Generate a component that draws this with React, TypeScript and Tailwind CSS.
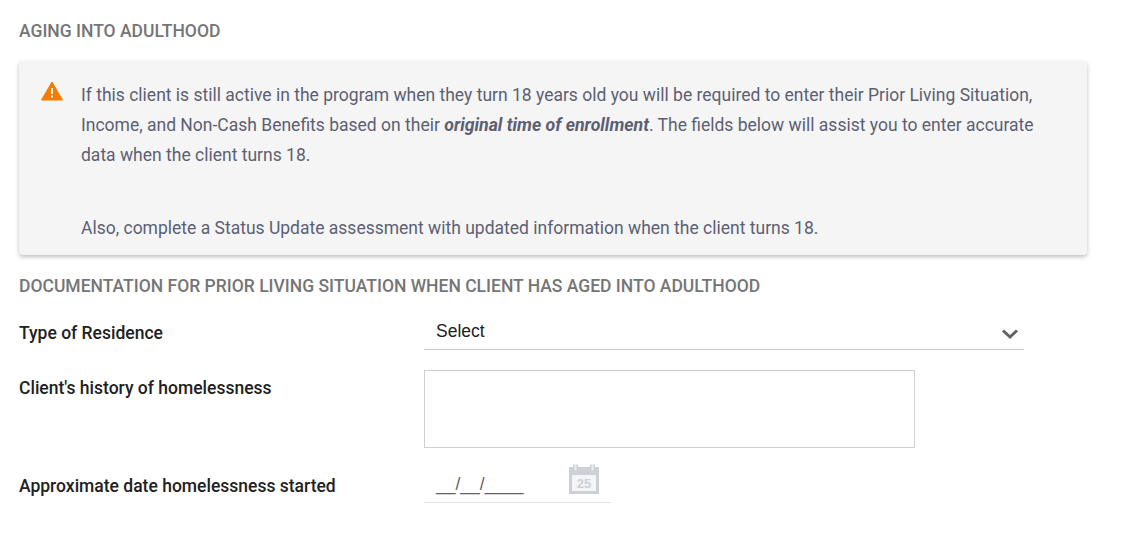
export default function App() {
  return (
    <div className="w-[1123px] h-[538px] overflow-hidden bg-white font-['Roboto',sans-serif]">
      <div className="w-[1068px] ml-[19px] pt-[21px]">
        <h3 className="text-[17.5px] leading-[21px] font-medium text-[#757575]">AGING INTO ADULTHOOD</h3>

        <div className="mt-[19px] flex h-[194px] rounded-[4px] bg-[#f5f5f5] shadow-[0_2px_4px_rgba(0,0,0,0.25)] pl-[22px] pt-[19px] text-[17.5px] leading-[30px] text-[#5c5f73]">
          <svg width="22" height="20" viewBox="0 0 22 20" className="mt-[1px] shrink-0">
            <path d="M11 1 L21.5 19 H0.5 Z" fill="#f57c00" stroke="#f57c00" strokeLinejoin="round" />
            <rect x="10" y="7" width="2" height="6" fill="#f5f5f5" />
            <rect x="10" y="14.5" width="2" height="2" fill="#f5f5f5" />
          </svg>
          <div className="ml-[18px] w-[970px]">
            <p>
              If this client is still active in the program when they turn 18 years old you will be required to enter their Prior Living Situation, Income, and Non-Cash Benefits based on their <b className="italic font-bold text-[17.7px]">original time of enrollment</b>. The fields below will assist you to enter accurate data when the client turns 18.
            </p>
            <p className="mt-[43px]">Also, complete a Status Update assessment with updated information when the client turns 18.</p>
          </div>
        </div>

        <h3 className="mt-[21px] text-[17.5px] leading-[21px] font-medium text-[#757575]">DOCUMENTATION FOR PRIOR LIVING SITUATION WHEN CLIENT HAS AGED INTO ADULTHOOD</h3>

        <div className="mt-[14px] flex">
          <label className="w-[405px] pt-[10px] text-[17.5px] leading-[24px] font-medium text-[#212121]">Type of Residence</label>
          <div className="flex h-[39px] w-[600px] items-center justify-between border-b border-[#cfcfcf] pl-[12px] pr-[5px] font-['Liberation_Sans',sans-serif] text-[17.5px] text-[#212121]">
            <span className="mt-[2px]">Select</span>
            <svg width="18" height="12" viewBox="0 0 18 12" className="mt-[8px]">
              <path d="M2 2.5 L9 9 L16 2.5" fill="none" stroke="#5f6368" strokeWidth="3" />
            </svg>
          </div>
        </div>

        <div className="mt-[20px] flex">
          <label className="w-[405px] pt-[6px] text-[17.5px] leading-[24px] font-medium text-[#212121]">Client's history of homelessness</label>
          <div className="h-[78px] w-[491px] border border-[#cfcfcf]" />
        </div>

        <div className="mt-[15px] flex">
          <label className="w-[405px] pt-[11px] text-[17.5px] leading-[24px] font-medium text-[#212121]">Approximate date homelessness started</label>
          <div className="flex h-[40px] w-[187px] items-start justify-between border-b border-[#e4e4e4] pl-[12px] pr-[12px]">
            <span className="mt-[9px] font-['Liberation_Sans',sans-serif] text-[17.5px] leading-[24px] text-[#5f6368]">__/__/____</span>
            <svg width="30" height="30" viewBox="0 0 30 30" className="mt-[1px]">
              <path d="M0 3 H4 V0.5 H9 V3 H21 V0.5 H26 V3 H30 V30 H0 Z" fill="#cdd1d6" />
              <rect x="5.5" y="0" width="2" height="6.5" fill="#eceef0" />
              <rect x="22.5" y="0" width="2" height="6.5" fill="#eceef0" />
              <rect x="3" y="11" width="24" height="16" fill="#f4f5f6" />
              <text x="15" y="24" textAnchor="middle" fontSize="13" fontWeight="700" fill="#cdd1d6" fontFamily="Liberation Sans, sans-serif">25</text>
            </svg>
          </div>
        </div>
      </div>
    </div>
  );
}
